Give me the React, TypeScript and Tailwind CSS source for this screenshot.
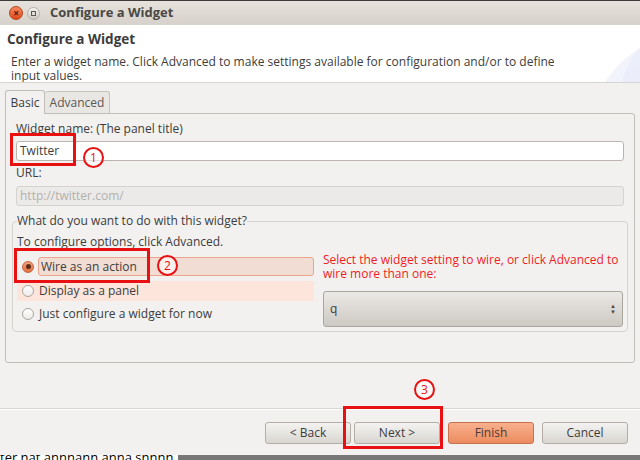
const radios = [
  { label: 'Wire as an action', checked: true },
  { label: 'Display as a panel', checked: false },
  { label: 'Just configure a widget for now', checked: false },
];

function Radio({ checked }: { checked: boolean }) {
  if (checked) {
    return (
      <span className="w-[12px] h-[12px] rounded-full border border-[#c9673f] bg-gradient-to-b from-[#f3a07c] to-[#e0703f] flex items-center justify-center shrink-0">
        <span className="w-[5px] h-[5px] rounded-full bg-[#5a2a17]" />
      </span>
    );
  }
  return <span className="w-[12px] h-[12px] rounded-full border border-[#a9a59e] bg-gradient-to-b from-white to-[#eeece9] shrink-0" />;
}

function Marker({ n, className }: { n: string; className: string }) {
  return (
    <span
      className={`absolute w-[21px] h-[21px] rounded-full border-2 border-[#e81010] bg-white/60 text-[#e81010] text-[12px] leading-none flex items-center justify-center ${className}`}
    >
      {n}
    </span>
  );
}

function Btn({ children, primary }: { children: string; primary?: boolean }) {
  return (
    <button
      type="button"
      className={`w-[86px] shrink-0 h-[22px] rounded-[3px] border text-[12px] ${
        primary
          ? 'border-[#c9714a] bg-gradient-to-b from-[#f8b08e] to-[#ec8b5e] text-[#4a3a33]'
          : 'border-[#b3aea6] bg-gradient-to-b from-[#f4f3f1] to-[#d9d6d1] text-[#3c3c3c]'
      }`}
    >
      {children}
    </button>
  );
}

export default function App() {
  return (
    <div className="relative w-[640px] h-[460px] overflow-hidden bg-[#f2f1f0] text-[#3c3c3c] font-['Open_Sans','Noto_Sans',sans-serif]">
      {/* title bar */}
      <div className="h-[25px] border-t border-[#3c3b37] bg-gradient-to-b from-[#e6e2dc] to-[#d6d1ca] flex items-center pl-[9px]">
        <span className="w-[14px] h-[14px] rounded-full bg-gradient-to-b from-[#f7885a] to-[#dd4814] border border-[#b8421a] flex items-center justify-center text-[#4b1d0a] text-[10px] leading-none font-bold">
          ×
        </span>
        <span className="ml-[4px] w-[13px] h-[13px] rounded-full bg-gradient-to-b from-[#f4f2ef] to-[#cfcac3] border border-[#b5b0a8] flex items-center justify-center">
          <span className="w-[5px] h-[5px] border border-[#5d5a55]" />
        </span>
        <span className="ml-[10px] text-[13px] font-bold text-[#4a4844]">Configure a Widget</span>
      </div>

      {/* header */}
      <div className="relative h-[58px] bg-white border-b border-[#d8d5d0] overflow-hidden px-[7px] pt-[5px]">
        <div className="absolute left-[590px] top-[10px] w-[200px] h-[200px] rounded-full bg-gradient-to-br from-[#f6f7fd] to-[#dde2f5]" />
        <div className="absolute left-[620px] top-[-5px] w-[160px] h-[160px] rounded-full bg-gradient-to-br from-[#eef0fb] to-[#d6dcf4] opacity-70" />
        <div className="relative text-[13.5px] font-bold leading-[18px]">Configure a Widget</div>
        <div className="relative mt-[7px] pl-[4px] pr-[60px] text-[12px] leading-[14px]">
          Enter a widget name. Click Advanced to make settings available for configuration and/or to define input values.
        </div>
      </div>

      {/* body */}
      <div className="px-[5px] pt-[6px]">
        <div className="flex items-end h-[24px]">
          <div className="relative z-10 h-[24px] w-[40px] border border-b-0 border-[#c2beb8] rounded-t-[3px] bg-[#f2f1f0] text-[12px] flex items-center justify-center -mb-px">
            Basic
          </div>
          <div className="h-[22px] w-[65px] border border-b-0 border-l-0 border-[#c7c3bd] rounded-t-[3px] bg-[#e9e7e4] text-[12px] text-[#5a5854] flex items-center justify-center">
            Advanced
          </div>
        </div>
        <div className="h-[250px] border border-[#c2beb8] rounded-b-[3px] rounded-tr-[3px] px-[10px] pt-[8px] text-[12px] leading-[14px]">
          <div>Widget name: (The panel title)</div>
          <div className="mt-[5px] h-[20px] border border-[#bab6af] rounded-[3px] bg-white pl-[3px] flex items-center">Twitter</div>
          <div className="mt-[5px]">URL:</div>
          <div className="mt-[6px] h-[20px] border border-[#d6d3ce] rounded-[3px] bg-[#ebeae8] pl-[3px] flex items-center text-[#b3b0ab]">
            http://twitter.com/
          </div>
          <fieldset className="mt-[8px] -mx-[4px] border border-[#d6d3ce] rounded-[4px] px-[4px] pb-[4px]">
            <legend className="px-0">What do you want to do with this widget?</legend>
            <div className="mt-[7px]">To configure options, click Advanced.</div>
            <div className="flex mt-[8px]">
              <div className="w-[297px] pl-[5px] flex flex-col">
                {radios.map((r, i) => (
                  <div
                    key={r.label}
                    className={`flex items-center gap-[4px] ${i === 0 ? 'h-[19px]' : i === 1 ? 'mt-[5px] h-[20px] bg-[#fde5dc] -ml-[5px] pl-[5px]' : 'mt-[3px] h-[20px]'}`}
                  >
                    <Radio checked={r.checked} />
                    {i === 0 ? (
                      <span className="flex-1 h-[19px] border border-[#eaa58a] rounded-[3px] bg-[#f2ddd4] pl-[2px] flex items-center">
                        {r.label}
                      </span>
                    ) : (
                      <span className="pl-[1px]">{r.label}</span>
                    )}
                  </div>
                ))}
              </div>
              <div className="ml-[9px] flex-1">
                <div className="text-[#f01e1e] -mt-[4px]">
                  Select the widget setting to wire, or click Advanced to wire more than one:
                </div>
                <div className="mt-[10px] h-[36px] border border-[#aaa6a0] rounded-[3px] bg-gradient-to-b from-[#ebe9e6] to-[#cdc9c3] flex items-center justify-between pl-[6px] pr-[6px]">
                  <span>q</span>
                  <span className="flex flex-col items-center text-[6px] leading-[6px] text-[#4e4c48]">
                    <span>▲</span>
                    <span>▼</span>
                  </span>
                </div>
              </div>
            </div>
          </fieldset>
        </div>
      </div>

      {/* footer */}
      <div className="mt-[45px] border-t border-[#d8d6d1] shadow-[inset_0_1px_0_#ffffff] h-[47px] flex items-center justify-end pr-[12px] pt-[1px]">
        <div className="flex gap-[3px]">
          <Btn>&lt; Back</Btn>
          <Btn>Next &gt;</Btn>
        </div>
        <div className="ml-[8px] flex gap-[8px]">
          <Btn primary>Finish</Btn>
          <Btn>Cancel</Btn>
        </div>
      </div>
      <div className="h-[5px] overflow-hidden bg-white flex">
        <span className="-mt-[7px] text-[13px] text-black whitespace-nowrap w-[178px] overflow-hidden">
          ter nat annnann anna snnnn. para
        </span>
        <span className="flex-1 bg-[#777]" />
      </div>

      {/* annotations */}
      <span className="absolute left-[10px] top-[133px] w-[66px] h-[33px] border-[3px] border-[#e81010]" />
      <Marker n="1" className="left-[83px] top-[147px]" />
      <span className="absolute left-[14px] top-[248px] w-[136px] h-[35px] border-[3px] border-[#e81010]" />
      <Marker n="2" className="left-[157px] top-[255px]" />
      <span className="absolute left-[343px] top-[406px] w-[100px] h-[43px] border-[3px] border-[#e81010]" />
      <Marker n="3" className="left-[414px] top-[379px]" />
    </div>
  );
}
